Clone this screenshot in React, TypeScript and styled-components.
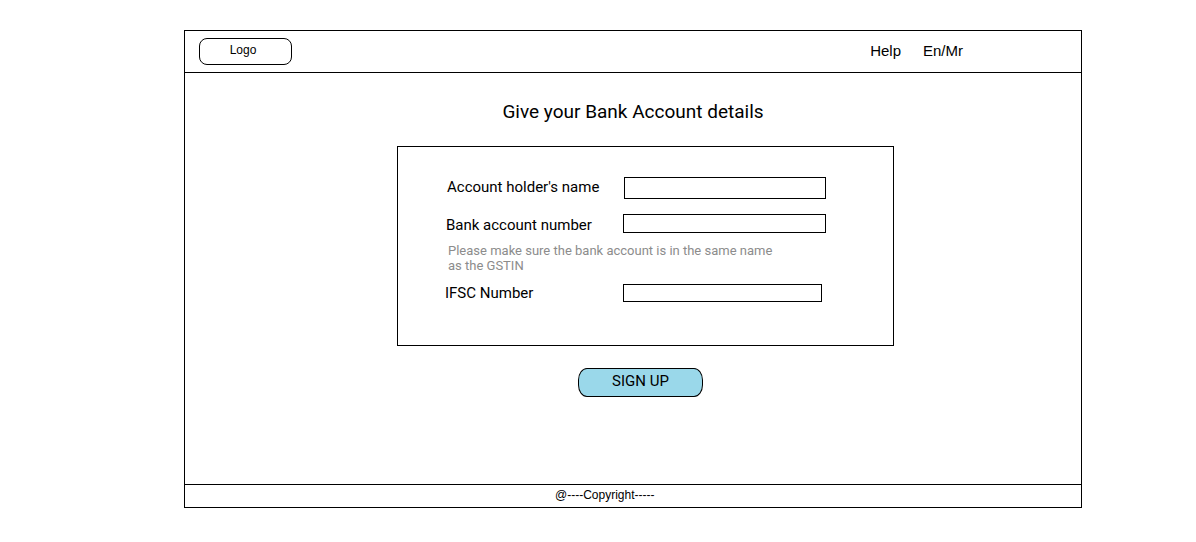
import React from 'react';
import styled, { createGlobalStyle } from 'styled-components';

const GlobalStyle = createGlobalStyle`
  html, body {
    margin: 0;
    padding: 0;
    background: #ffffff;
  }
  body {
    font-family: Roboto, "Liberation Sans", Arial, sans-serif;
    color: #000;
  }
`;

const Frame = styled.div`
  box-sizing: border-box;
  margin: 30px 0 0 184px;
  width: 898px;
  height: 478px;
  border: 1px solid #000;
  display: flex;
  flex-direction: column;
`;

const Header = styled.header`
  height: 41px;
  border-bottom: 1px solid #000;
  display: flex;
  align-items: center;
  padding: 0 118px 0 14px;
`;

const LogoBox = styled.div`
  box-sizing: border-box;
  width: 93px;
  height: 27px;
  border: 1px solid #000;
  border-radius: 8px;
  display: flex;
  align-items: center;
  justify-content: center;
  font-family: "Liberation Sans", Arial, sans-serif;
  font-size: 12px;
  padding: 0 5px 3px 0;
`;

const Nav = styled.nav`
  margin-left: auto;
  display: flex;
  align-items: center;
  gap: 22px;
  padding-bottom: 2px;
`;

const NavLink = styled.span`
  font-family: "Liberation Sans", Arial, sans-serif;
  font-size: 15px;
`;

const Main = styled.main`
  flex: 1;
  display: flex;
  flex-direction: column;
  padding-top: 28px;
`;

const Title = styled.h1`
  margin: 0;
  text-align: center;
  font-size: 19px;
  font-weight: 400;
  line-height: 22px;
`;

const FormBox = styled.div`
  box-sizing: border-box;
  width: 497px;
  height: 200px;
  margin: 23px 0 0 212px;
  border: 1px solid #000;
  padding-top: 30px;
  display: flex;
  flex-direction: column;
`;

const Row = styled.div<{ $labelLeft: number; $gap: number }>`
  display: flex;
  align-items: center;
  padding-left: ${(p) => p.$labelLeft}px;
  margin-top: ${(p) => p.$gap}px;
`;

const Label = styled.label<{ $width: number; $shift: number }>`
  width: ${(p) => p.$width}px;
  font-size: 15px;
  line-height: 18px;
  position: relative;
  top: ${(p) => p.$shift}px;
`;

const TextBox = styled.div<{ $w: number; $h: number }>`
  box-sizing: border-box;
  width: ${(p) => p.$w}px;
  height: ${(p) => p.$h}px;
  border: 1px solid #000;
`;

const Hint = styled.p`
  margin: 10px 0 0 50px;
  font-size: 13px;
  line-height: 15px;
  color: #8c8c8c;
  width: 340px;
`;

const SignUp = styled.button`
  box-sizing: border-box;
  margin: 22px 0 0 393px;
  width: 125px;
  height: 29px;
  border: 1px solid #000;
  border-radius: 9px / 12px;
  background: #9ad8ea;
  font-family: Roboto, "Liberation Sans", Arial, sans-serif;
  font-size: 15px;
  color: #000;
  padding: 0 0 3px 0;
`;

const Footer = styled.footer`
  box-sizing: border-box;
  height: 23px;
  border-top: 1px solid #000;
  display: flex;
  align-items: center;
  padding: 0 0 2px 370px;
  font-family: "Liberation Sans", Arial, sans-serif;
  font-size: 12px;
`;

export default function App() {
  return (
    <>
      <GlobalStyle />
      <Frame>
        <Header>
          <LogoBox>Logo</LogoBox>
          <Nav>
            <NavLink>Help</NavLink>
            <NavLink>En/Mr</NavLink>
          </Nav>
        </Header>
        <Main>
          <Title>Give your Bank Account details</Title>
          <FormBox>
            <Row $labelLeft={49} $gap={0}>
              <Label $width={177} $shift={-1}>Account holder's name</Label>
              <TextBox $w={202} $h={22} />
            </Row>
            <Row $labelLeft={48} $gap={15}>
              <Label $width={177} $shift={1}>Bank account number</Label>
              <TextBox $w={203} $h={19} />
            </Row>
            <Hint>
              Please make sure the bank account is in the same name as the GSTIN
            </Hint>
            <Row $labelLeft={47} $gap={11}>
              <Label $width={178} $shift={0}>IFSC Number</Label>
              <TextBox $w={199} $h={18} />
            </Row>
          </FormBox>
          <SignUp>SIGN UP</SignUp>
        </Main>
        <Footer>@----Copyright-----</Footer>
      </Frame>
    </>
  );
}
